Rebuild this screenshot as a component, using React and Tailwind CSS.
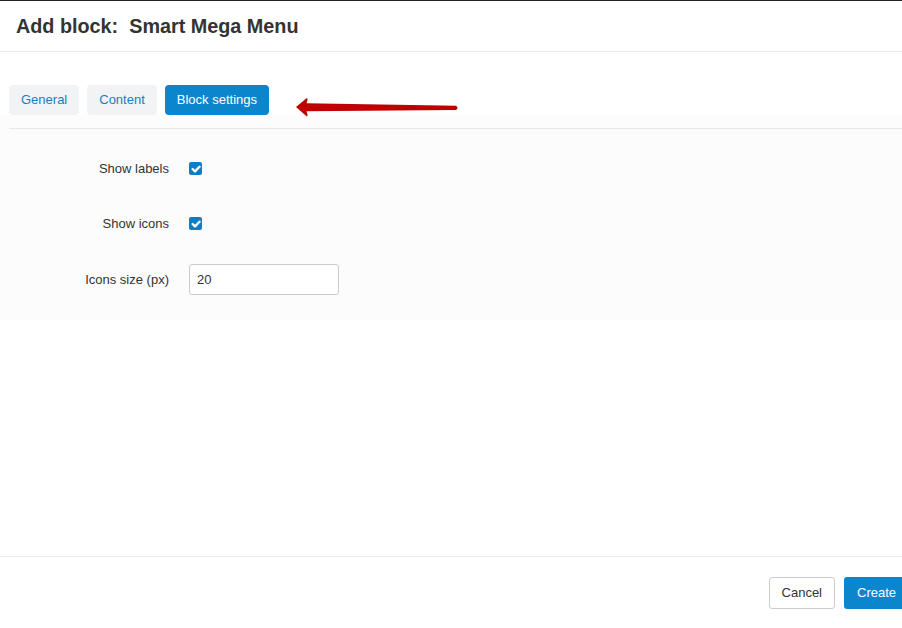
import React from 'react';

const Check = () => (
    <span className="w-[13px] h-[13px] rounded-[2px] bg-[#0b7ec5] flex items-center justify-center">
        <svg width="10" height="10" viewBox="0 0 10 10">
            <path d="M1.6 5 L4 7.4 L8.5 2.7" fill="none" stroke="#fff" strokeWidth="2.3" strokeLinecap="round" strokeLinejoin="round" />
        </svg>
    </span>
);

export default function App() {
    const tabs = ['General', 'Content', 'Block settings'];

    return (
        <div className="w-[902px] h-[628px] bg-white overflow-hidden flex flex-col font-['Liberation_Sans',Arial,sans-serif] text-[#333]">
            {/* Header */}
            <div className="border-t border-[#222] h-[52px] border-b border-b-[#e9e9e9] flex items-center pl-4 shrink-0">
                <h1 className="text-[19.8px] font-bold text-[#333] leading-none mt-[1px]">Add block:&nbsp; Smart Mega Menu</h1>
            </div>

            {/* Tabs */}
            <div className="pl-[9px] pt-[33px] shrink-0">
                <div className="flex items-center gap-[8px] relative">
                    {tabs.map((t, i) => (
                        <div
                            key={t}
                            className={`h-[30px] flex items-center px-3 rounded-[4px] text-[13px] ${i === 2 ? 'bg-[#0b86cc] text-white' : 'bg-[#f2f3f4] text-[#1a7cbf]'}`}
                        >
                            {t}
                        </div>
                    ))}
                    <svg className="absolute left-[285px] top-[11px] z-10" width="166" height="22" viewBox="0 0 166 22">
                        <path d="M2 11 L12.5 2.3 Q14 1.8 13.5 4 L12.5 7.3 L162 9.8 Q165 12 162 14 L12.5 15.2 L13.5 18.5 Q14 20.7 12.5 20.2 Z" fill="#c00000" />
                    </svg>
                </div>
            </div>

            {/* Settings pane */}
            <div className="bg-[#fcfcfc] pt-[13px] pb-[25px] shrink-0">
                <div className="ml-[9px] border-b border-[#e3e8ec]"></div>
                <div className="flex flex-col pt-[31px]">
                    <div className="flex items-center h-[18px]">
                        <label className="w-[169px] text-right text-[13px] text-[#333]">Show labels</label>
                        <div className="ml-[20px] -mt-[1px]"><Check /></div>
                    </div>
                    <div className="flex items-center h-[18px] mt-[37px]">
                        <label className="w-[169px] text-right text-[13px] text-[#333]">Show icons</label>
                        <div className="ml-[20px] -mt-[1px]"><Check /></div>
                    </div>
                    <div className="flex items-center mt-[31px]">
                        <label className="w-[169px] text-right text-[13px] text-[#333]">Icons size (px)</label>
                        <div className="ml-[20px] w-[150px] h-[31px] border border-[#ccc] rounded-[3px] bg-white flex items-center px-[7px] text-[13px] text-[#333]">20</div>
                    </div>
                </div>
            </div>

            <div className="flex-1"></div>

            {/* Footer */}
            <div className="h-[72px] border-t border-[#ececec] flex items-start justify-end pt-[20px] gap-[9px] shrink-0 -mr-[10px]">
                <button className="h-[32px] px-[12px] border border-[#ccc] rounded-[3px] bg-white text-[13px] text-[#333]">Cancel</button>
                <button className="h-[32px] w-[68px] text-left pl-[13px] rounded-[3px] bg-[#0b86cc] text-[13px] text-white">Create</button>
            </div>
        </div>
    );
}
